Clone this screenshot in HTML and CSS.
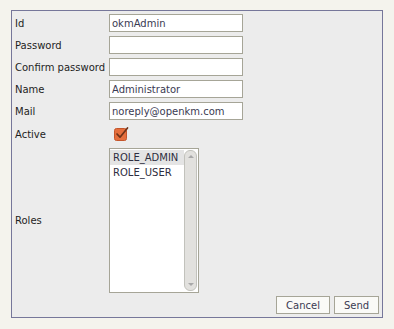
FILE: index.html
```html
<!DOCTYPE html>
<html>
<head>
<meta charset="utf-8">
<link rel="stylesheet" href="styles.css">
</head>
<body>
<div class="panel">
  <form class="form">
    <label class="lbl">Id</label>
    <input class="txt" type="text" value="okmAdmin">
    <label class="lbl">Password</label>
    <input class="txt" type="password" value="">
    <label class="lbl">Confirm password</label>
    <input class="txt" type="password" value="">
    <label class="lbl">Name</label>
    <input class="txt" type="text" value="Administrator">
    <label class="lbl">Mail</label>
    <input class="txt" type="text" value="noreply@openkm.com">
    <label class="lbl">Active</label>
    <div class="chk-cell">
      <svg class="chk" width="15" height="15" viewBox="0 0 15 15">
        <rect x="0.5" y="2.5" width="12" height="12" rx="2" fill="#e56e3c" stroke="#c4552b"/>
        <path d="M3 8 L6 11.2 L13.5 2" fill="none" stroke="#6e3218" stroke-width="1.7" stroke-linecap="round" stroke-linejoin="round"/>
      </svg>
    </div>
    <label class="lbl">Roles</label>
    <div class="list">
      <div class="items">
        <div class="item sel">ROLE_ADMIN</div>
        <div class="item">ROLE_USER</div>
      </div>
      <div class="sbar">
        <div class="sthumb">
          <span class="arr up"></span>
          <span class="arr down"></span>
        </div>
      </div>
    </div>
  </form>
  <div class="actions">
    <button class="btn btn-cancel" type="button">Cancel</button>
    <button class="btn btn-send" type="button">Send</button>
  </div>
</div>
</body>
</html>
```

FILE: styles.css
```css
html, body {
  margin: 0;
  padding: 0;
  background: #f4f3ed;
}
body {
  font-family: "DejaVu Sans", Verdana, sans-serif;
  font-size: 10px;
  color: #1e1e1e;
}
.panel {
  margin: 10px 0 0 11px;
  border: 1px solid #76779a;
  background: #ececec;
  padding: 3px;
  box-sizing: border-box;
  width: 372px;
  height: 308px;
  display: flex;
  flex-direction: column;
}
.form {
  display: grid;
  grid-template-columns: 94px 134px;
  grid-template-rows: 18px 18px 18px 18px 18px 20px 145px;
  row-gap: 4px;
  margin: 0;
}
.lbl {
  display: flex;
  align-items: center;
  color: #1e1e1e;
}
.txt {
  box-sizing: border-box;
  width: 134px;
  height: 18px;
  margin: 0;
  border: 1px solid #a6a597;
  background: #fff;
  padding: 0 2px;
  font-family: "DejaVu Sans", Verdana, sans-serif;
  font-size: 10px;
  color: #3a3a52;
  outline: none;
}
.chk-cell {
  display: flex;
  align-items: center;
  padding-left: 5px;
}
.chk {
  display: block;
  margin-top: -2px;
}
.list {
  box-sizing: border-box;
  width: 90px;
  height: 145px;
  border: 1px solid #a6a597;
  background: #fff;
  display: flex;
}
.items {
  flex: 1;
  padding-top: 1px;
}
.item {
  height: 15px;
  line-height: 15px;
  padding-left: 3px;
  color: #2e2e40;
  white-space: nowrap;
  overflow: hidden;
}
.item.sel {
  background: #e4e4e4;
}
.sbar {
  box-sizing: border-box;
  width: 14px;
  padding: 1px 1px 1px 0;
}
.sthumb {
  box-sizing: border-box;
  height: 100%;
  border: 1px solid #c2c2bc;
  border-radius: 6px;
  background: #e2e1de;
  position: relative;
}
.arr {
  position: absolute;
  left: 3px;
  width: 0;
  height: 0;
  border-left: 3px solid transparent;
  border-right: 3px solid transparent;
}
.arr.up {
  top: 4px;
  border-bottom: 3px solid #a8a8a8;
}
.arr.down {
  bottom: 4px;
  border-top: 3px solid #a8a8a8;
}
.actions {
  margin-top: auto;
  display: flex;
  justify-content: flex-end;
  gap: 4px;
}
.btn {
  box-sizing: border-box;
  height: 18px;
  margin: 0;
  padding: 0;
  border: 1px solid #a6a597;
  background: #fafaf7;
  font-family: "DejaVu Sans", Verdana, sans-serif;
  font-size: 10px;
  color: #3a3a52;
}
.btn-cancel { width: 54px; }
.btn-send { width: 45px; }
```
